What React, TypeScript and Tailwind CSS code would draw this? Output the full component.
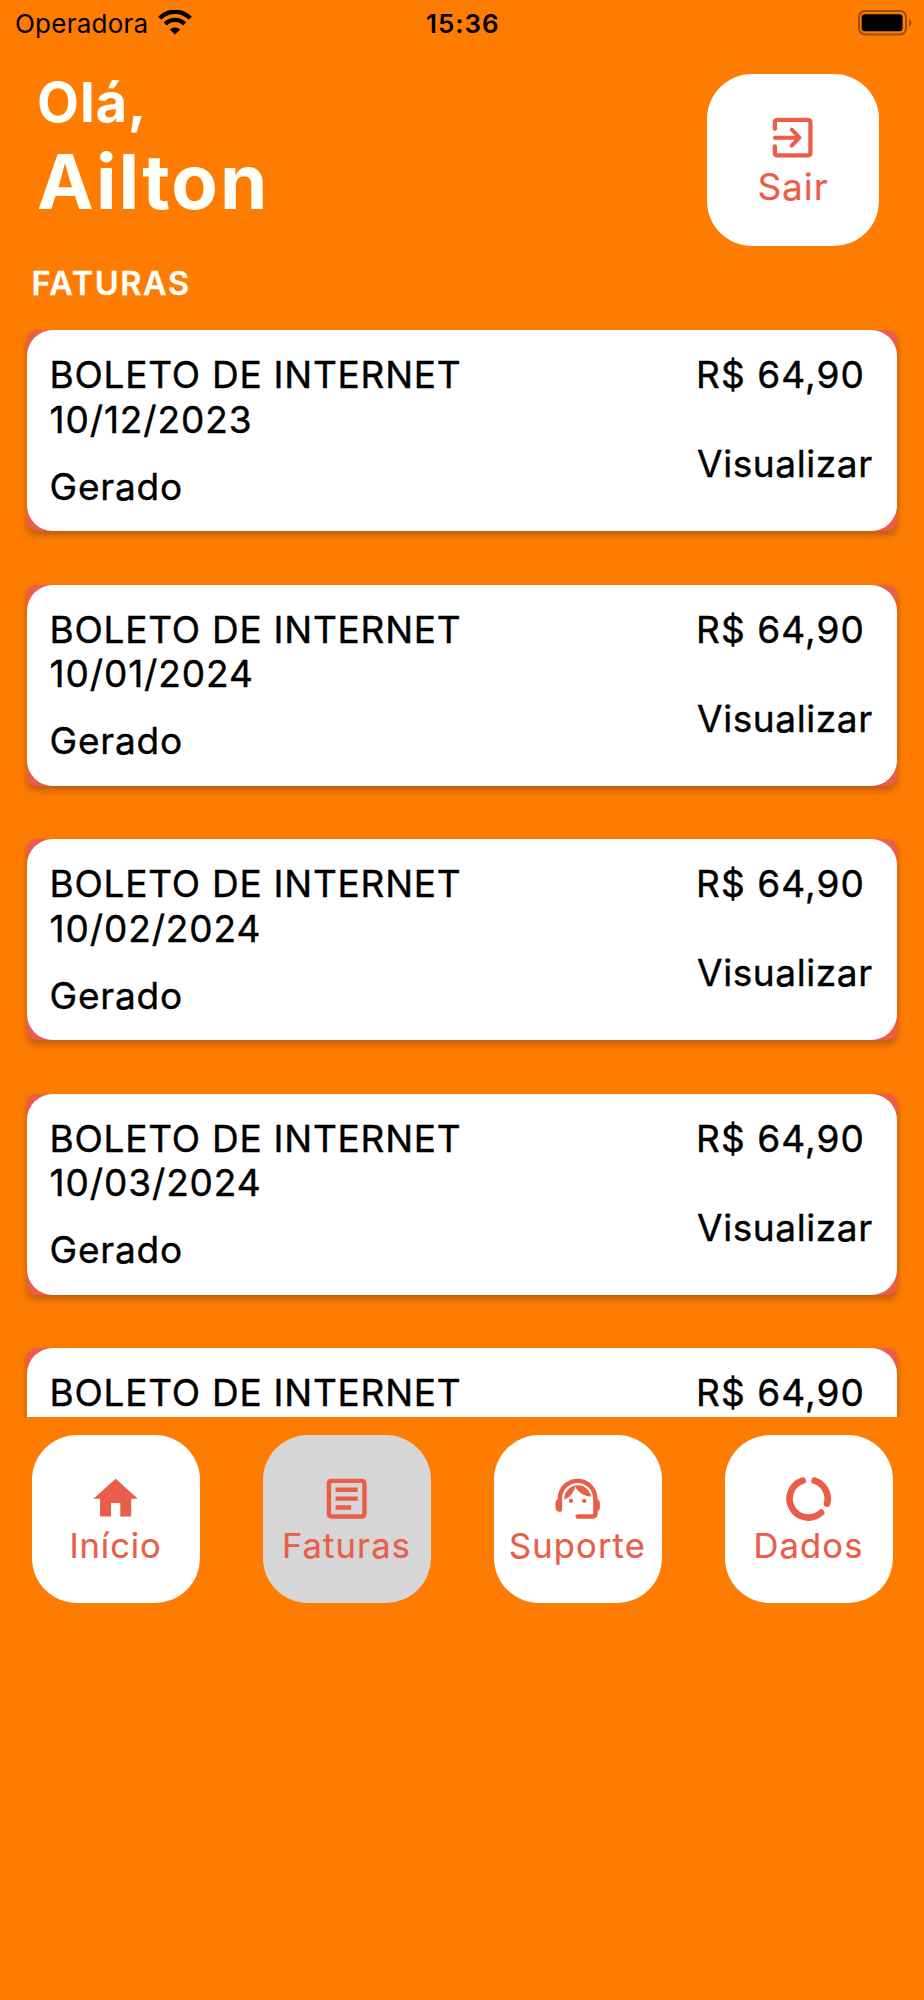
import React from 'react';

type IconProps = { className?: string };

const FONT = "font-['Inter','Liberation_Sans',sans-serif]";
const ICON = 'size-[53.3px] shrink-0';

function ExitIcon() {
  return (
    <svg viewBox="0 0 24 24" className={ICON} fill="none" stroke="currentColor" strokeWidth="1.95" strokeLinecap="round" strokeLinejoin="round">
      <path d="M4 8V5a1 1 0 0 1 1-1h14a1 1 0 0 1 1 1v14a1 1 0 0 1-1 1H5a1 1 0 0 1-1-1v-3" />
      <path d="M4 12h11M11.6 8.4 15.1 12l-3.5 3.6" strokeWidth="1.8" />
    </svg>
  );
}

function HomeIcon() {
  return (
    <svg viewBox="0 0 24 24" className={ICON} fill="currentColor">
      <path d="M9.9 20v-6h4.2v6H19v-8h3L12 3 2 12h3v8z" />
    </svg>
  );
}

function ArticleIcon() {
  return (
    <svg viewBox="0 0 24 24" className={ICON} fill="currentColor">
      <path d="M19 5v14H5V5h14m0-2H5c-1.1 0-2 .9-2 2v14c0 1.1.9 2 2 2h14c1.1 0 2-.9 2-2V5c0-1.1-.9-2-2-2z" />
      <path d="M14 17H7v-2h7v2zm3-4H7v-2h10v2zm0-4H7V7h10v2z" />
    </svg>
  );
}

function SupportIcon() {
  return (
    <svg viewBox="0 0 24 24" className={ICON} fill="currentColor">
      <path d="M21 12.22C21 6.73 16.74 3 12 3c-4.69 0-9 3.65-9 9.28-.6.34-1 .98-1 1.72v2c0 1.1.9 2 2 2 .55 0 1-.45 1-1v-5.1c0-3.87 3.13-7 7-7s7 3.13 7 7V19h-7c-.55 0-1 .45-1 1s.45 1 1 1h7c1.1 0 2-.9 2-2v-1.22c.59-.31 1-.92 1-1.64v-2.3c0-.7-.41-1.31-1-1.62z" />
      <circle cx="9" cy="13" r="1" />
      <circle cx="15" cy="13" r="1" />
      <path d="M18 11.03C17.52 8.18 15.04 6 12.05 6c-3.03 0-6.29 2.51-6.03 6.45 2.47-1.01 4.33-3.21 4.86-5.89 1.31 2.63 4 4.44 7.12 4.47z" />
    </svg>
  );
}

function DataUsageIcon() {
  return (
    <svg viewBox="0 0 24 24" className={ICON} fill="none" stroke="currentColor" strokeWidth="3" strokeLinecap="round">
      <path d="M9.3 3.9A8.5 8.5 0 1 0 17.6 18.3" />
      <path d="M14.7 3.9A8.5 8.5 0 0 1 20.3 14.2" />
    </svg>
  );
}

function WifiIcon({ className }: IconProps) {
  return (
    <svg viewBox="0 0 34 25" className={className} fill="none" stroke="black">
      <path d="M1.7 8.2A21.5 21.5 0 0 1 32.3 8.2" strokeWidth="4.3" />
      <path d="M7.3 14A13.7 13.7 0 0 1 26.7 14" strokeWidth="4.2" />
      <path d="M17 24.6 11.8 19.6A7.5 7.5 0 0 1 22.2 19.6z" fill="black" stroke="none" />
    </svg>
  );
}

function BatteryIcon({ className }: IconProps) {
  return (
    <svg viewBox="0 0 54 26" className={className}>
      <rect x="1" y="1" width="47" height="23.5" rx="6" fill="none" stroke="#9f4f08" strokeWidth="2" />
      <rect x="3.7" y="4.2" width="40.8" height="17" rx="3" fill="black" />
      <path d="M51 8.7c3.2 1.5 3.2 6.5 0 8z" fill="#9f4f08" />
    </svg>
  );
}

const invoices = ['10/12/2023', '10/01/2024', '10/02/2024', '10/03/2024', '10/04/2024'];

function InvoiceCard({ date }: { date: string }) {
  return (
    <article className="shrink-0 rounded-[9px] bg-[#e95d49] shadow-[0_4px_7px_rgba(90,40,40,0.4)]">
      <div className="flex h-[201px] justify-between rounded-[26px] bg-white px-[22.5px] pt-[23px] text-[37px] leading-[44.5px] text-black [-webkit-text-stroke:0.4px_black]">
        <div className="flex flex-col whitespace-nowrap">
          <p className="tracking-[0.76px]">BOLETO DE INTERNET</p>
          <p className="tracking-[0.9px]">{date}</p>
          <p className="mt-[22.5px] tracking-[0.78px]">Gerado</p>
        </div>
        <div className="flex w-[177.5px] flex-col gap-[44.5px] whitespace-nowrap">
          <p className="-ml-px tracking-[1.08px]">R$ 64,90</p>
          <p className="tracking-[0.6px]">Visualizar</p>
        </div>
      </div>
    </article>
  );
}

const tabs = [
  { label: 'Início', icon: <HomeIcon />, spacing: 'tracking-[0.9px]' },
  { label: 'Faturas', icon: <ArticleIcon />, spacing: 'tracking-[1.15px]', active: true },
  { label: 'Suporte', icon: <SupportIcon />, spacing: 'tracking-[1.15px]' },
  { label: 'Dados', icon: <DataUsageIcon />, spacing: 'tracking-[1.15px]' },
];

export default function App() {
  return (
    <div className={`flex h-[2000px] w-[924px] flex-col overflow-hidden bg-[#fe7c02] ${FONT}`}>
      <div className="grid h-[47px] shrink-0 grid-cols-3 items-center pr-[12.5px] pl-[15px] text-[26px] leading-[47px] text-black">
        <div className="flex items-center gap-[10px]">
          <span className="tracking-[0.23px]">Operadora</span>
          <WifiIcon className="mt-[-3px] h-[25px] w-[34px]" />
        </div>
        <span className="pr-px text-center font-semibold tracking-[0.95px]">15:36</span>
        <BatteryIcon className="mt-[-2px] h-[26px] w-[54px] justify-self-end" />
      </div>

      <header className="flex h-[212px] shrink-0 justify-between pt-[26.5px] pr-[45.5px] pl-[37px] text-[#fffffa]">
        <div>
          <p className="h-[65px] text-[54.5px] leading-[57px] font-bold tracking-[0.9px]">Olá,</p>
          <h1 className="text-[76px] leading-[84px] font-bold tracking-[2px]">Ailton</h1>
        </div>
        <button className="flex size-[172px] flex-col items-center rounded-[45px] bg-white pt-[37px] text-[37px] leading-[45.5px] text-[#e95d49] [-webkit-text-stroke:0.2px_#e95d49]">
          <ExitIcon />
          <span className="pl-px tracking-[0.9px]">Sair</span>
        </button>
      </header>

      <h2 className="h-[71px] shrink-0 pt-[5px] pl-[31.5px] text-[32.5px] leading-[40px] font-semibold tracking-[1.6px] text-[#fffffa] [-webkit-text-stroke:0.3px_#fffffa]">FATURAS</h2>

      <main className="flex h-[1087px] shrink-0 flex-col gap-[53.5px] overflow-hidden px-[27px]">
        {invoices.map((date) => (
          <InvoiceCard key={date} date={date} />
        ))}
      </main>

      <nav className="grid shrink-0 grid-cols-4 justify-items-center pt-[17.5px]">
        {tabs.map((tab) => (
          <button
            key={tab.label}
            className={`flex size-[168px] flex-col items-center rounded-[45px] pt-[37px] text-[34.5px] leading-[42.5px] text-[#e95d49] [-webkit-text-stroke:0.2px_#e95d49] ${tab.spacing} ${tab.active ? 'bg-[#d6d6d6]' : 'bg-white'}`}
          >
            {tab.icon}
            {tab.label}
          </button>
        ))}
      </nav>
    </div>
  );
}
